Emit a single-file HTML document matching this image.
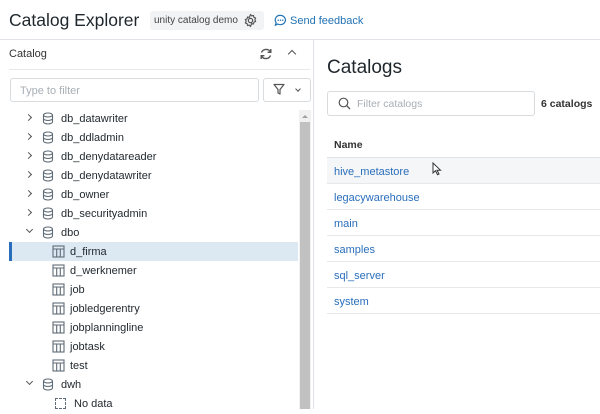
<!DOCTYPE html>
<html><head><style>
*{box-sizing:border-box;margin:0;padding:0}
body{width:600px;height:409px;overflow:hidden;background:#fff;font-family:"Liberation Sans",sans-serif;color:#1f272d;position:relative}
.a{position:absolute}
.row{position:absolute;left:0;width:298px;height:19px;font-size:11px;line-height:19px;color:#1f272d}
.row .t{position:absolute;left:61px}
.row.tb .t{left:70px}
.chev{position:absolute;left:26px;top:6px;width:5px;height:5px;border-right:1.3px solid #555;border-bottom:1.3px solid #555;transform:rotate(-45deg)}
.chev.d{transform:rotate(45deg);top:4px;left:27px}
.rr{position:absolute;left:327px;width:273px;height:26px;border-bottom:1px solid #e6e8ea;font-size:11px;line-height:28px;padding-left:7px;color:#2a6ebb}
</style></head><body>
<div class="a" style="left:9px;top:10px;font-size:17.5px;color:#1f272d">Catalog Explorer</div>
<div class="a" style="left:150px;top:11px;width:114px;height:19px;background:#f2f3f4;border-radius:3px;font-size:10px;line-height:19px;padding-left:4px;color:#444">unity catalog demo</div>
<svg class="a" style="left:243px;top:13px" width="15" height="15" viewBox="0 0 16 16"><circle cx="8" cy="8" r="2.3" fill="none" stroke="#555" stroke-width="1.3"/><path d="M8 1.5l1.2 1.6 2-.5.4 2 1.9.8-.9 1.8.9 1.8-1.9.8-.4 2-2-.5L8 14.5l-1.2-1.6-2 .5-.4-2-1.9-.8.9-1.8-.9-1.8 1.9-.8.4-2 2 .5z" fill="none" stroke="#555" stroke-width="1.2" stroke-linejoin="round"/></svg>
<svg class="a" style="left:274px;top:14px" width="13" height="13" viewBox="0 0 14 14"><path d="M7 1.5a5.5 5 0 1 1-3 9.3L1.5 12l.8-2.6A5 5 0 0 1 7 1.5z" fill="none" stroke="#2272b4" stroke-width="1.3"/><circle cx="4.6" cy="6.7" r=".8" fill="#2272b4"/><circle cx="7" cy="6.7" r=".8" fill="#2272b4"/><circle cx="9.4" cy="6.7" r=".8" fill="#2272b4"/></svg>
<div class="a" style="left:290px;top:15px;font-size:11px;color:#2272b4">Send feedback</div>
<div class="a" style="left:0;top:39px;width:600px;height:1px;background:#e0e4e8"></div>
<div class="a" style="left:313px;top:40px;width:1px;height:369px;background:#dfe3e7"></div>
<div class="a" style="left:9px;top:48px;font-size:11px;color:#333">Catalog</div>
<svg class="a" style="left:259px;top:47px" width="14" height="14" viewBox="0 0 14 14"><path d="M11.5 5A5 5 0 0 0 2.5 5.5M2.5 9a5 5 0 0 0 9-.5" fill="none" stroke="#555" stroke-width="1.4"/><path d="M11.8 2v3.3H8.6M2.2 12V8.7h3.2" fill="none" stroke="#555" stroke-width="1.4"/></svg>
<div class="a" style="left:289px;top:51px;width:6px;height:6px;border-left:1.5px solid #555;border-top:1.5px solid #555;transform:rotate(45deg)"></div>
<div class="a" style="left:9px;top:69px;width:301px;height:1px;background:#e6e8ea"></div>
<div class="a" style="left:10px;top:78px;width:249px;height:24px;border:1px solid #d8dcdf;border-radius:3px;font-size:11px;line-height:24px;padding-left:9px;color:#a8afb5">Type to filter</div>
<div class="a" style="left:263px;top:78px;width:48px;height:24px;border:1px solid #d8dcdf;border-radius:3px"></div>
<svg class="a" style="left:273px;top:83px" width="12" height="12" viewBox="0 0 12 12"><path d="M1 1.5h10L7 6.5V11L5 10V6.5z" fill="none" stroke="#555" stroke-width="1.2" stroke-linejoin="round"/></svg>
<div class="a" style="left:296px;top:87px;width:4px;height:4px;border-right:1.2px solid #555;border-bottom:1.2px solid #555;transform:rotate(45deg)"></div>
<div class="a" style="left:299px;top:110px;width:12px;height:299px;background:#f1f1f1"></div>
<div class="a" style="left:302px;top:115px;width:0;height:0;border-left:3px solid transparent;border-right:3px solid transparent;border-bottom:3px solid #a0a0a0"></div>
<div class="a" style="left:300px;top:122px;width:10px;height:287px;background:#c1c1c1"></div>

<div class="a" style="left:9px;top:242px;width:289px;height:19px;background:#dce8f2"></div>
<div class="a" style="left:9px;top:242px;width:3px;height:19px;background:#2a6ebb"></div>

<div id="tree"></div>
<script>
var db='<svg style="position:absolute;left:42px;top:3px" width="12" height="13" viewBox="0 0 12 13"><ellipse cx="6" cy="3" rx="4.5" ry="2" fill="none" stroke="#5f6b76" stroke-width="1.1"/><path d="M1.5 3v7c0 1.1 2 2 4.5 2s4.5-.9 4.5-2V3M1.5 6.5c0 1.1 2 2 4.5 2s4.5-.9 4.5-2" fill="none" stroke="#5f6b76" stroke-width="1.1"/></svg>';
var tb='<svg style="position:absolute;left:52px;top:3px" width="13" height="13" viewBox="0 0 13 13"><rect x="1" y="1" width="11" height="11" fill="none" stroke="#5f6b76" stroke-width="1.1"/><path d="M1 4h11M4.7 4v8M8.3 4v8" stroke="#5f6b76" stroke-width="1.1"/></svg>';
var items=[['c','db_datawriter'],['c','db_ddladmin'],['c','db_denydatareader'],['c','db_denydatawriter'],['c','db_owner'],['c','db_securityadmin'],['o','dbo'],['t','d_firma'],['t','d_werknemer'],['t','job'],['t','jobledgerentry'],['t','jobplanningline'],['t','jobtask'],['t','test'],['o','dwh'],['n','No data']];
var h='';
items.forEach(function(it,i){var y=109+i*19;var k=it[0];
 if(k=='c'||k=='o'){h+='<div class="row c" style="top:'+y+'px"><div class="chev'+(k=='o'?' d':'')+'"></div>'+db+'<span class="t" style="top:1px">'+it[1]+'</span></div>';}
 else if(k=='t'){h+='<div class="row tb" style="top:'+y+'px">'+tb+'<span class="t" style="top:1px">'+it[1]+'</span></div>';}
 else{h+='<div class="row" style="top:'+y+'px"><div style="position:absolute;left:55px;top:4px;width:11px;height:11px;border:1.2px dashed #5f6b76"></div><span style="position:absolute;left:74px;top:1px">No data</span></div>';}
});
document.getElementById('tree').innerHTML=h;
</script>

<div class="a" style="left:327px;top:57px;font-size:19px;color:#1f272d">Catalogs</div>
<div class="a" style="left:327px;top:91px;width:208px;height:25px;border:1px solid #d8dcdf;border-radius:3px;font-size:10.5px;line-height:25px;padding-left:29px;color:#a8afb5">Filter catalogs</div>
<svg class="a" style="left:338px;top:97px" width="13" height="13" viewBox="0 0 13 13"><circle cx="5.5" cy="5.5" r="4.3" fill="none" stroke="#555" stroke-width="1.2"/><path d="M8.6 8.6L12 12" stroke="#555" stroke-width="1.3"/></svg>
<div class="a" style="left:541px;top:98px;font-size:10.5px;font-weight:bold;color:#333">6 catalogs</div>
<div class="a" style="left:334px;top:139px;font-size:10.5px;font-weight:bold;color:#333">Name</div>
<div class="a" style="left:327px;top:157px;width:273px;height:1px;background:#e0e3e6"></div>
<div class="rr" style="top:158px;background:#f5f6f7">hive_metastore</div>
<div class="rr" style="top:184px">legacywarehouse</div>
<div class="rr" style="top:210px">main</div>
<div class="rr" style="top:236px">samples</div>
<div class="rr" style="top:262px">sql_server</div>
<div class="rr" style="top:288px">system</div>
<svg class="a" style="left:432px;top:162px" width="10" height="14" viewBox="0 0 10 14"><path d="M1 1v10l2.5-2.3 2 4 1.5-.7-2-3.8H8.5z" fill="#fff" stroke="#333" stroke-width="1"/></svg>
</body></html>
